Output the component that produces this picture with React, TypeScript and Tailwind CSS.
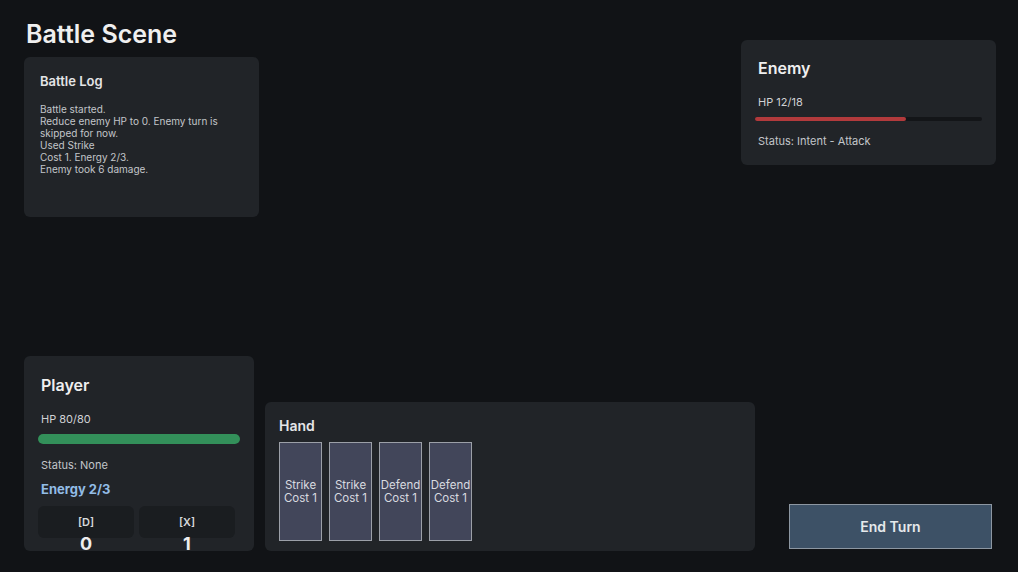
const log = [
  'Battle started.',
  'Reduce enemy HP to 0. Enemy turn is skipped for now.',
  'Used Strike',
  'Cost 1. Energy 2/3.',
  'Enemy took 6 damage.',
];

const hand = [
  { name: 'Strike', cost: 1 },
  { name: 'Strike', cost: 1 },
  { name: 'Defend', cost: 1 },
  { name: 'Defend', cost: 1 },
];

const piles = [
  { key: '[D]', count: 0 },
  { key: '[X]', count: 1 },
];

const enemy = { hp: 12, maxHp: 18, status: 'Intent - Attack' };
const player = { hp: 80, maxHp: 80, status: 'None', energy: 2, maxEnergy: 3 };

export default function App() {
  return (
    <div
      className="flex h-screen w-full flex-col bg-[#111316] pl-[24px] pr-[22px] pt-[18px] pb-[21px] text-[#e9eaec]"
      style={{ fontFamily: 'Inter, "Noto Sans", sans-serif' }}
    >
      {/* top row: title + log on the left, enemy on the right */}
      <div className="flex justify-between">
        <div className="flex flex-col">
          <h1 className="pl-[2px] text-[25px] font-semibold leading-8 text-[#efefef]">Battle Scene</h1>
          <div className="mt-[7px] h-[160px] w-[235px] rounded-md bg-[#212428] px-4 pt-4">
            <h3 className="text-[13px] font-semibold leading-4 text-[#e4e5e7]">Battle Log</h3>
            <div className="mt-[14px] text-[10px] leading-[12px] text-[#c3c6ca]">
              {log.map((line, i) => (
                <div key={i}>{line}</div>
              ))}
            </div>
          </div>
        </div>

        <div className="mt-[22px] h-[125px] w-[255px] rounded-md bg-[#212428] px-4 pt-4">
          <h2 className="pl-[1px] text-[16px] font-semibold leading-6 text-[#efefef]">Enemy</h2>
          <div className="mt-[15px] pl-[1px] text-[11px] leading-[14px] text-[#d0d2d5]">
            HP {enemy.hp}/{enemy.maxHp}
          </div>
          <div className="-mx-0.5 mt-[8px] h-[4px] rounded-full bg-[#131518]">
            <div
              className="h-full rounded-full bg-[#b23a3c]"
              style={{ width: `${(enemy.hp / enemy.maxHp) * 100}%` }}
            />
          </div>
          <div className="mt-[13px] pl-[1px] text-[11px] leading-[14px] text-[#c3c6ca]">
            Status: {enemy.status}
          </div>
        </div>
      </div>

      <div className="flex-1" />

      {/* bottom row: player, hand, end turn */}
      <div className="flex items-end">
        <div className="h-[195px] w-[230px] overflow-hidden rounded-md bg-[#212428] px-4 pt-[17px]">
          <h2 className="pl-[1px] text-[16px] font-semibold leading-6 text-[#efefef]">Player</h2>
          <div className="mt-[15px] pl-[1px] text-[11px] leading-[14px] text-[#d0d2d5]">
            HP {player.hp}/{player.maxHp}
          </div>
          <div className="-mx-0.5 mt-[8px] h-[10px] rounded-full bg-[#131518]">
            <div
              className="h-full rounded-full bg-[#33905a]"
              style={{ width: `${(player.hp / player.maxHp) * 100}%` }}
            />
          </div>
          <div className="mt-[14px] pl-[1px] text-[11px] leading-[14px] text-[#c3c6ca]">
            Status: {player.status}
          </div>
          <div className="mt-[9px] pl-[1px] text-[13px] font-bold leading-4 text-[#92bce6]">
            Energy {player.energy}/{player.maxEnergy}
          </div>
          <div className="-mx-0.5 mt-[9px] flex gap-[5px]">
            {piles.map((p) => (
              <div
                key={p.key}
                className="flex h-[32px] w-[96px] flex-col items-center rounded-md bg-[#1a1d20] pt-[9px]"
              >
                <div className="text-[11px] font-semibold leading-[14px] text-[#d6d8db]">{p.key}</div>
                <div className="mt-[4px] text-[18px] font-bold leading-[22px] text-[#eeeeee]">{p.count}</div>
              </div>
            ))}
          </div>
        </div>

        <div className="ml-[11px] w-[490px] rounded-md bg-[#212428] px-[14px] pt-[14px] pb-[10px]">
          <h3 className="text-[14px] font-semibold leading-5 text-[#e4e5e7]">Hand</h3>
          <div className="mt-[6px] flex gap-[7px]">
            {hand.map((c, i) => (
              <div
                key={i}
                className="flex h-[99px] w-[43px] flex-col items-center justify-center border border-[#9ca0a8] bg-[#42465a] text-center text-[11.5px] leading-[13px] text-[#d9dbe0]"
              >
                <span>{c.name}</span>
                <span>Cost {c.cost}</span>
              </div>
            ))}
          </div>
        </div>

        <div className="flex-1" />

        <button className="mr-[4px] mb-[2px] h-[45px] w-[203px] border border-[#8d97a2] bg-[#3d5166] text-[14px] font-semibold text-[#e6e9ec]">
          End Turn
        </button>
      </div>
    </div>
  );
}
